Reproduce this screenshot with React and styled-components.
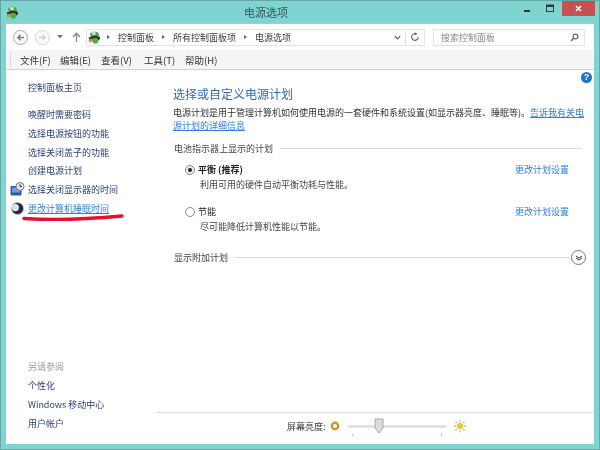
import React from 'react';
import styled, { createGlobalStyle } from 'styled-components';

const Global = createGlobalStyle`
  html, body { margin: 0; padding: 0; width: 600px; height: 450px; overflow: hidden; background: #7fd3d0; }
  * { box-sizing: border-box; }
  body { font-family: "Noto Sans CJK SC", "Liberation Sans", sans-serif; font-size: 9px; color: #333; }
`;

const Win = styled.div`
  width: 600px; height: 450px; background: #7fd3d0; border: 1px solid #63a9a8;
  display: flex; flex-direction: column; padding: 0 5px 5px; position: relative; filter: blur(0.4px);
`;
const TitleBar = styled.div`
  height: 22px; flex: none; display: flex; align-items: center; position: relative;
`;
const TitleText = styled.div`
  position: absolute; left: 238px; top: 3px; font-size: 11px; line-height: 17px; color: #36595a;
`;
const WinBtns = styled.div`
  margin-left: auto; display: flex; align-self: flex-start; align-items: center; margin-right: -1px;
`;
const WinBtn = styled.div`
  width: ${p => p.$w}px; height: 15px; display: flex; align-items: center; justify-content: center;
  background: ${p => p.$close ? '#c75050' : 'transparent'};
`;
const Client = styled.div`
  flex: 1; background: #fff; display: flex; flex-direction: column; min-height: 0; border-top: 1px solid #9ccfcd;
`;
const NavBar = styled.div`
  height: 26px; flex: none; display: flex; align-items: center; padding: 0 8px 0 7px; background: #fff;
`;
const RoundBtn = styled.div`
  width: 15px; height: 15px; border-radius: 50%; border: 1.5px solid ${p => p.$off ? '#d5d5d5' : '#a8a8a8'};
  display: flex; align-items: center; justify-content: center; margin-right: 7px; background: #fafafa;
`;
const NavIcon = styled.div`
  display: flex; align-items: center; margin-right: ${p => p.$mr || 0}px; margin-left: ${p => p.$ml || 0}px;
`;
const AddrBox = styled.div`
  width: 339px; height: 17px; border: 1px solid #e4e4e4; display: flex; align-items: center; margin-left: 5px; padding-left: 1px;
`;
const Crumb = styled.span`
  font-size: 9px; color: #3a3a3a; white-space: nowrap;
`;
const CrumbSep = styled.span`
  width: 0; height: 0; border-left: 3px solid #666; border-top: 2.5px solid transparent; border-bottom: 2.5px solid transparent;
  margin: 0 8px 0 ${p => p.$ml}px;
`;
const AddrEnd = styled.div`
  margin-left: auto; display: flex; align-items: center; height: 100%;
`;
const Refresh = styled.div`
  width: 19px; height: 100%; border-left: 1px solid #e4e4e4; display: flex; align-items: center; justify-content: center;
  margin-left: 4px;
`;
const SearchBox = styled.div`
  width: 152px; height: 17px; border: 1px solid #e4e4e4; margin-left: 8px; display: flex; align-items: center;
  padding: 0 5px 0 7px; color: #8a8a8a; font-size: 9px; justify-content: space-between;
`;
const MenuBar = styled.div`
  height: 20px; flex: none; background: #f4f5f7; border-bottom: 1px solid #d2d2d2; display: flex; align-items: center;
  padding-left: 14px; gap: 12px; position: relative;
`;
const Grip = styled.div`
  position: absolute; left: 4px; top: 2px; bottom: 2px; border-left: 1px dotted #c4c4c4;
`;
const MenuItem = styled.span`
  font-size: 9.5px; color: #333; white-space: nowrap; line-height: 14px; width: ${p => p.$w}px;
`;
const Body = styled.div`
  flex: 1; display: flex; min-height: 0;
`;
const Side = styled.div`
  width: 150px; flex: none; padding: 11px 0 13px 22px; display: flex; flex-direction: column;
`;
const SideLink = styled.div`
  font-size: 9px; line-height: 13px; height: ${p => p.$h || 18.8}px; color: ${p => p.$active ? '#2f7fd8' : '#2c3f73'};
  text-decoration: ${p => p.$active ? 'underline' : 'none'}; position: relative; white-space: nowrap;
`;
const SideIcon = styled.div`
  position: absolute; left: -18px; top: -1px; width: 15px; height: 15px;
`;
const SideSpacer = styled.div`
  flex: 1;
`;
const SideMuted = styled.div`
  font-size: 9px; line-height: 13px; height: 19px; color: #9a9a9a;
`;
const Stroke = styled.svg`
  position: absolute; left: 18px; top: 212px; width: 110px; height: 10px;
`;
const MainCol = styled.div`
  flex: 1; display: flex; flex-direction: column; min-width: 0;
`;
const Content = styled.div`
  flex: 1; padding: 15px 12px 0 17px; position: relative;
`;
const Help = styled.div`
  position: absolute; right: 2px; top: 2px; width: 11px; height: 11px; border-radius: 50%; background: #1f73c9; color: #fff;
  font: bold 9px/11px "Liberation Sans", sans-serif; text-align: center;
`;
const Heading = styled.div`
  font-size: 12px; line-height: 17px; color: #2f6db5; margin-bottom: 4px;
`;
const Para = styled.div`
  font-size: 9px; line-height: 13px; color: #333; width: 413px; margin-bottom: 10px;
`;
const A = styled.span`
  color: #2f7fd8; text-decoration: underline;
`;
const Section = styled.div`
  display: flex; align-items: center; height: 13px; color: #444; font-size: 9px; gap: 6px; white-space: nowrap; padding-left: 1px; margin-top: ${p => p.$mt || 0}px;
`;
const Rule = styled.div`
  flex: 1; height: 1px; background: #dedede;
`;
const Plan = styled.div`
  display: flex; align-items: flex-start; margin: ${p => p.$mt}px 0 0 12px; height: 30px;
`;
const Radio = styled.div`
  width: 10px; height: 10px; border-radius: 50%; border: 1px solid #8a8a8a; flex: none; margin-top: 2px; background: ${p => p.$on ? '#ececec' : '#fff'};
  display: flex; align-items: center; justify-content: center;
  &::after { content: ""; width: 4px; height: 4px; border-radius: 50%; background: ${p => p.$on ? '#222' : 'transparent'}; }
`;
const PlanText = styled.div`
  margin-left: 3px; flex: 1;
`;
const PlanName = styled.div`
  font-size: 9px; line-height: 13px; color: #222; font-weight: ${p => p.$b ? 700 : 400}; margin-bottom: 2px;
`;
const PlanDesc = styled.div`
  font-size: 9px; line-height: 13px; color: #444; margin-left: 2px;
`;
const PlanLink = styled.div`
  font-size: 9px; line-height: 13px; color: #2f7fd8; margin-right: 13px;
`;
const Chevron = styled.div`
  width: 15px; height: 15px; border-radius: 50%; border: 1px solid #777; display: flex; align-items: center; justify-content: center; flex: none; margin: 0 -4px 0 -5px;
`;
const Footer = styled.div`
  height: 32px; flex: none; border-top: 1px solid #e0e0e0; display: flex; align-items: center; padding: 0 0 5px 131px; position: relative;
`;
const FooterLabel = styled.span`
  font-size: 9px; color: #333; white-space: nowrap; margin-right: 4px;
`;
const Slider = styled.div`
  width: 98px; height: 3px; background: #e2e2e2; margin: 0 7px 0 8px; position: relative;
`;
const Thumb = styled.svg`
  position: absolute; left: 26px; top: -7px; width: 10px; height: 16px;
`;
const Tick = styled.i`
  position: absolute; top: 9px; left: ${p => p.$l}px; width: 1px; height: 2px; background: #bbb;
`;

const PowerIcon = ({ s = 16 }) => (
  <svg width={s} height={s} viewBox="0 0 16 16">
    <path d="M2.5 3 L7 .5 L12 1.5 L14 6 L8 8 L3 6 Z" fill="#4aa84a" />
    <path d="M5 1.5 L9.5 1.5 L9 4.5 L5.5 4.5 Z" fill="#dff0d2" />
    <path d="M1 8 C4 5.5 12 5.5 15 7.5 L14 11 C10 13 5 13 2 11 Z" fill="#2f2f2f" />
    <circle cx="9" cy="12" r="3.6" fill="#4fae45" />
    <path d="M0.5 11 L5 9 L6.5 12 L2 14.5 Z" fill="#b99a4a" />
  </svg>
);
const Menu = ['文件(F)|28', '编辑(E)|29', '查看(V)|31', '工具(T)|29', '帮助(H)|30'];

export default function App() {
  return (
    <Win>
      <Global />
      <TitleBar>
        <NavIcon><PowerIcon s={13} /></NavIcon>
        <TitleText>电源选项</TitleText>
        <WinBtns>
          <WinBtn $w={24}><svg width="8" height="8" viewBox="0 0 8 8"><rect x="1" y="5" width="6" height="2" fill="#2d3b3b" /></svg></WinBtn>
          <WinBtn $w={23}><svg width="9" height="9" viewBox="0 0 9 9"><rect x=".5" y="1" width="7" height="6.5" fill="none" stroke="#2d3b3b" /><rect x=".5" y="1" width="7" height="2" fill="#2d3b3b" /></svg></WinBtn>
          <WinBtn $w={33} $close><svg width="9" height="9" viewBox="0 0 9 9"><path d="M2 2 L7 7 M7 2 L2 7" stroke="#fff" strokeWidth="1.6" /></svg></WinBtn>
        </WinBtns>
      </TitleBar>
      <Client>
        <NavBar>
          <RoundBtn><svg width="9" height="9" viewBox="0 0 9 9"><path d="M8 4.5 H2 M4.5 1.8 L1.8 4.5 L4.5 7.2" fill="none" stroke="#777" strokeWidth="1.3" /></svg></RoundBtn>
          <RoundBtn $off><svg width="9" height="9" viewBox="0 0 9 9"><path d="M1 4.5 H7 M4.5 1.8 L7.2 4.5 L4.5 7.2" fill="none" stroke="#cfcfcf" strokeWidth="1.3" /></svg></RoundBtn>
          <NavIcon $mr={9}><svg width="6" height="4" viewBox="0 0 6 4"><path d="M0 0 H6 L3 3.5 Z" fill="#777" /></svg></NavIcon>
          <NavIcon><svg width="9" height="10" viewBox="0 0 9 10"><path d="M4.5 10 V2 M1 5 L4.5 1.2 L8 5" fill="none" stroke="#888" strokeWidth="1.3" /></svg></NavIcon>
          <AddrBox>
            <PowerIcon s={13} />
            <CrumbSep $ml={6} />
            <Crumb>控制面板</Crumb>
            <CrumbSep $ml={8} />
            <Crumb>所有控制面板项</Crumb>
            <CrumbSep $ml={8} />
            <Crumb>电源选项</Crumb>
            <AddrEnd>
              <svg width="7" height="5" viewBox="0 0 7 5"><path d="M.8 1 L3.5 3.8 L6.2 1" fill="none" stroke="#666" strokeWidth="1.2" /></svg>
              <Refresh><svg width="10" height="10" viewBox="0 0 10 10"><path d="M8.2 5.2 A3.3 3.3 0 1 1 5.5 1.8" fill="none" stroke="#666" strokeWidth="1.1" /><path d="M4.8 .2 L7.6 1.9 L4.8 3.6 Z" fill="#666" /></svg></Refresh>
            </AddrEnd>
          </AddrBox>
          <SearchBox>
            <span>搜索控制面板</span>
            <svg width="9" height="9" viewBox="0 0 9 9"><circle cx="5.5" cy="3.5" r="2.4" fill="none" stroke="#666" strokeWidth="1.1" /><path d="M3.7 5.3 L1 8" stroke="#666" strokeWidth="1.5" /></svg>
          </SearchBox>
        </NavBar>
        <MenuBar>
          <Grip />
          {Menu.map(m => { const [t, w] = m.split('|'); return <MenuItem key={t} $w={+w}>{t}</MenuItem>; })}
        </MenuBar>
        <Body>
          <Side>
            <SideLink $h={27}>控制面板主页</SideLink>
            <SideLink>唤醒时需要密码</SideLink>
            <SideLink>选择电源按钮的功能</SideLink>
            <SideLink>选择关闭盖子的功能</SideLink>
            <SideLink>创建电源计划</SideLink>
            <SideLink>
              <SideIcon>
                <svg width="15" height="15" viewBox="0 0 15 15"><rect x="0.5" y="4" width="11" height="9.5" rx="1" fill="#2f5a9e" /><rect x="2" y="5.5" width="8" height="5" fill="#6f9bd8" /><circle cx="10" cy="4.5" r="4" fill="#e4e4e4" stroke="#777" /><path d="M10 2.2 V4.6 H12" fill="none" stroke="#333" /></svg>
              </SideIcon>
              选择关闭显示器的时间
            </SideLink>
            <SideLink $active>
              <SideIcon>
                <svg width="15" height="15" viewBox="0 0 15 15"><circle cx="7.5" cy="7.5" r="6.5" fill="#b4b7c2" /><circle cx="7.5" cy="7.5" r="5.6" fill="#23284a" /><circle cx="5.4" cy="6.6" r="3.6" fill="#dfe3ee" /></svg>
              </SideIcon>
              更改计算机睡眠时间
            </SideLink>
            <SideSpacer />
            <SideMuted>另请参阅</SideMuted>
            <SideLink>个性化</SideLink>
            <SideLink>Windows 移动中心</SideLink>
            <SideLink $h={14}>用户帐户</SideLink>
          </Side>
          <MainCol>
            <Content>
              <Help>?</Help>
              <Heading>选择或自定义电源计划</Heading>
              <Para>电源计划是用于管理计算机如何使用电源的一套硬件和系统设置(如显示器亮度、睡眠等)。<A>告诉我有关电源计划的详细信息</A></Para>
              <Section>电池指示器上显示的计划<Rule /></Section>
              <Plan $mt={8}>
                <Radio $on />
                <PlanText>
                  <PlanName $b>平衡 (推荐)</PlanName>
                  <PlanDesc>利用可用的硬件自动平衡功耗与性能。</PlanDesc>
                </PlanText>
                <PlanLink>更改计划设置</PlanLink>
              </Plan>
              <Plan $mt={12}>
                <Radio />
                <PlanText>
                  <PlanName>节能</PlanName>
                  <PlanDesc>尽可能降低计算机性能以节能。</PlanDesc>
                </PlanText>
                <PlanLink>更改计划设置</PlanLink>
              </Plan>
              <Section $mt={16}>显示附加计划<Rule /><Chevron><svg width="8" height="6" viewBox="0 0 8 6"><path d="M1 1 L4 3 L7 1 M1 3 L4 5 L7 3" fill="none" stroke="#333" strokeWidth="1" /></svg></Chevron></Section>
            </Content>
            <Footer>
              <FooterLabel>屏幕亮度:</FooterLabel>
              <svg width="10" height="10" viewBox="0 0 10 10"><circle cx="5" cy="5" r="3.2" fill="none" stroke="#c9962f" strokeWidth="2.4" /></svg>
              <Slider>
                <Thumb viewBox="0 0 10 16"><path d="M1 1 H9 V10 L5 15 L1 10 Z" fill="#dcdcdc" stroke="#a8a8a8" /></Thumb>
                <Tick $l={4} /><Tick $l={93} />
              </Slider>
              <svg width="14" height="14" viewBox="0 0 14 14"><circle cx="7" cy="7" r="3.2" fill="#e9c84e" /><path d="M7 .5 V3 M7 11 V13.5 M.5 7 H3 M11 7 H13.5 M2.4 2.4 L4 4 M10 10 L11.6 11.6 M2.4 11.6 L4 10 M10 4 L11.6 2.4" stroke="#d8c88a" strokeWidth="1.4" /></svg>
            </Footer>
          </MainCol>
        </Body>
        <Stroke viewBox="0 0 110 10"><path d="M5 5.5 C30 7 70 6 103 3" fill="none" stroke="#e8102a" strokeWidth="3.4" strokeLinecap="round" /></Stroke>
      </Client>
    </Win>
  );
}
